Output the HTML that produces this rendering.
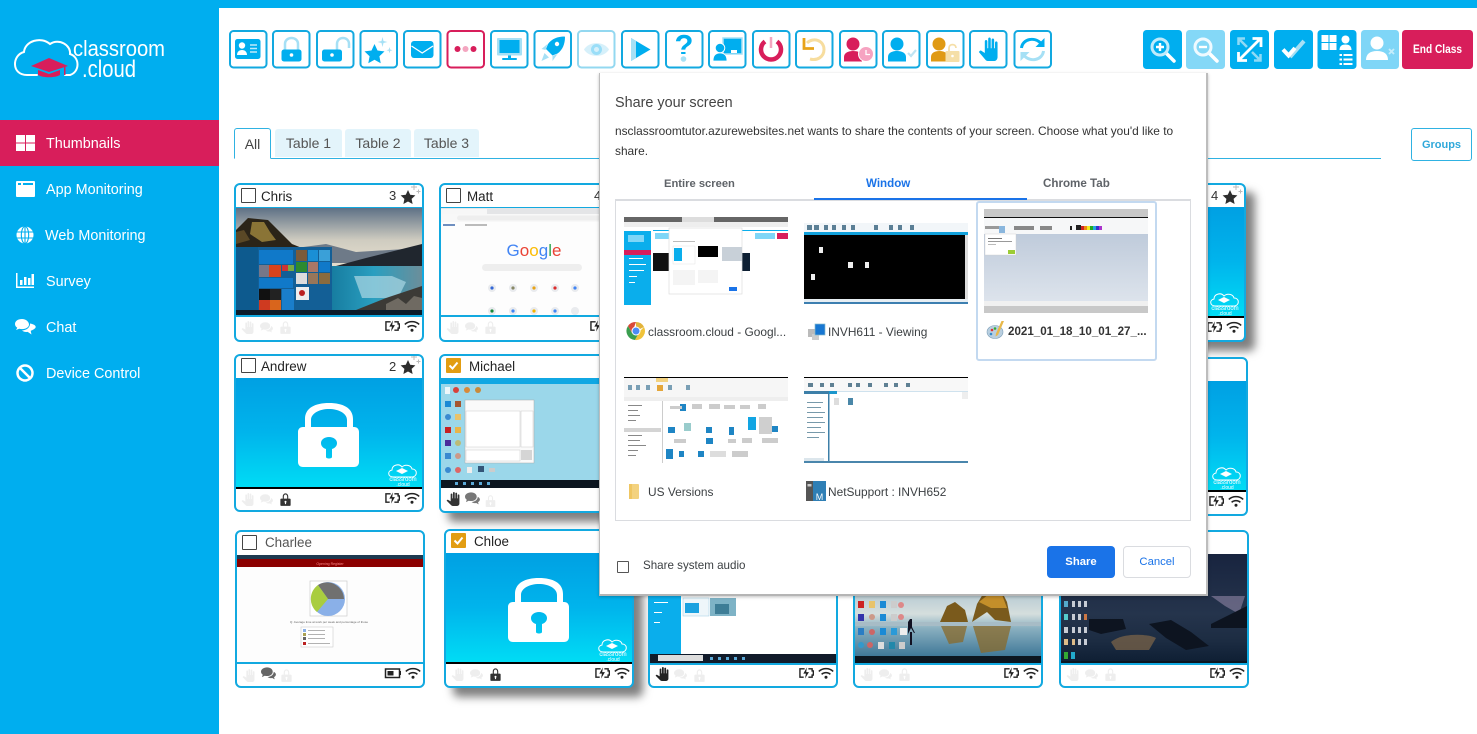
<!DOCTYPE html>
<html lang="en"><head><meta charset="utf-8"><title>classroom.cloud</title>
<style>
html,body{margin:0;padding:0;background:#fff}
body{position:relative;width:1477px;height:734px;overflow:hidden;font-family:"Liberation Sans",sans-serif;color:#222}
.a{position:absolute;white-space:nowrap}
#top{position:absolute;left:0;top:0;width:1477px;height:8px;background:#00aeef}
#side{position:absolute;left:0;top:0;width:219px;height:734px;background:#00aeef}
.nav{position:absolute;left:46px;color:#fff;font-size:14.4px;white-space:nowrap;line-height:18px}
#act{position:absolute;left:0;top:120px;width:219px;height:46px;background:#d81e5b}
.tab{position:absolute;top:129px;height:28px;line-height:29px;background:#e3f4fb;color:#555;font-size:14px;text-align:center;border-radius:3px 3px 0 0}
.card{position:absolute;width:190px;height:159px;box-sizing:border-box;border:2px solid #12a9e0;border-radius:6px;background:#fff;overflow:hidden}
.sh{box-shadow:9px 9px 9px rgba(0,0,0,.5)}
.cb{position:absolute;left:5px;top:3px;width:15px;height:15px;box-sizing:border-box;border:1.5px solid #444;border-radius:1px;background:#fff}
.cb.on{background:#e29d12;border:0}
.nm{position:absolute;left:25px;top:4px;font-size:13.4px;line-height:16px;color:#222;white-space:nowrap}
.num{position:absolute;left:153px;top:3px;font-size:13px;line-height:16px;color:#333}
.st{position:absolute;left:163px;top:-1px;width:22px;height:22px}
.im{position:absolute;left:0;width:186px;display:block}
.ln{position:absolute;left:0;width:186px;background:#12a9e0}
.ft{position:absolute;left:0;width:186px;height:24px}
#dlg{position:absolute;left:599px;top:73px;width:609px;height:523px;background:#fff;box-sizing:border-box;border:1px solid #bdbdbd;border-top:0;border-right:2px solid #bdbdbd;border-bottom:2px solid #b5b5b5;box-shadow:0 1px 3px rgba(0,0,0,.25)}
.d{position:absolute;white-space:nowrap;font-size:11.9px;color:#3c4043;line-height:14px}
.th{position:absolute;display:block}
</style></head>
<body>
<svg width="0" height="0" style="position:absolute">
<defs>
<linearGradient id="lg" x1="0" y1="0" x2="0" y2="1"><stop offset="0" stop-color="#00a0e3"/><stop offset=".5" stop-color="#00b4ec"/><stop offset="1" stop-color="#00dcf5"/></linearGradient>
<symbol id="hand" viewBox="0 0 24 24"><path d="M23 5.500V20c0 2.200-1.800 4-4 4h-7.300c-1.080 0-2.100-.43-2.850-1.190L1 14.830s1.260-1.230 1.300-1.250c.22-.19.49-.29.79-.29.22 0 .42.06.6.16.04.01 4.310 2.460 4.310 2.460V4c0-.83.67-1.500 1.500-1.500S11 3.170 11 4v7h1V1.500c0-.83.67-1.500 1.500-1.500S15 .67 15 1.500V11h1V2.500c0-.83.67-1.500 1.500-1.500s1.500.67 1.500 1.500V11h1V5.500c0-.83.67-1.500 1.500-1.500s1.500.67 1.500 1.500z"/></symbol>
<symbol id="chat" viewBox="0 0 16 13"><path d="M6.500 0C3 0 0 2 0 4.600c0 1.300.7 2.400 1.900 3.200L1 10.400l3-1.500c.8.2 1.600.3 2.500.3 3.500 0 6-2 6-4.600S10 0 6.500 0z"/><path d="M13.600 4.600c0 3-2.900 5.400-6.600 5.600 1 .9 2.200 1.200 3.600 1.200.4 0 .9 0 1.400-.1l2.600 1.400-.7-2.300c1.200-.7 2-1.700 2-2.900 0-1.100-.9-2.100-2.300-2.900z"/></symbol>
<symbol id="lock" viewBox="0 0 12 14"><path fill-rule="evenodd" d="M3 6V3.800C3 1.700 4.300.3 6 .3s3 1.400 3 3.500V6h1.600c.6 0 1 .4 1 1v6c0 .6-.4 1-1 1H1.400c-.6 0-1-.4-1-1V7c0-.6.4-1 1-1zm1.200 0h3.600V3.800C7.800 2.400 7 1.500 6 1.500s-1.800.9-1.800 2.300zM6 8.300a1.200 1.200 0 0 0-.6 2.200V12h1.200v-1.500A1.200 1.200 0 0 0 6 8.300z"/></symbol>
<symbol id="batt" viewBox="0 0 16 12"><path d="M6 1.500H1v9h4M10 10.500h4V8.200h1.300V3.800H14V1.500h-4" fill="none" stroke="#222" stroke-width="1.500"/><path d="M8.400 0 4.600 6.600h2.800L6.400 12l4.200-7H7.700z" fill="#222"/></symbol>
<symbol id="wifi" viewBox="0 0 16 12"><path d="M.8 4.400C4.800.7 11.200.7 15.200 4.400M3.600 7.300c2.500-2.200 6.300-2.200 8.800 0" fill="none" stroke="#222" stroke-width="1.500"/><circle cx="8" cy="10.200" r="1.500" fill="#222"/></symbol>
<symbol id="star" viewBox="0 0 22 22"><path d="M9 6l2.200 4.800 5.200.6-3.800 3.500 1 5.100L9 17.500 4.400 20l1-5.100-3.800-3.500 5.200-.6z" fill="#2e2e2e"/><path d="M15 0v6M12 3h6M19.500 5.500v4M17.500 7.500h4" stroke="#bbb" stroke-width="1"/></symbol>
<symbol id="ft0" viewBox="0 0 186 24"><g fill="#eeeeee"><use href="#hand" x="5" y="4" width="13" height="13"/><use href="#chat" x="24" y="5" width="13" height="11"/><use href="#lock" x="44" y="4" width="11" height="13"/></g><use href="#batt" x="149" y="3" width="15" height="12"/><use href="#wifi" x="168" y="3" width="16" height="12"/></symbol>
<symbol id="ftl" viewBox="0 0 186 24"><g fill="#eeeeee"><use href="#hand" x="5" y="4" width="13" height="13"/><use href="#chat" x="24" y="5" width="13" height="11"/></g><use href="#lock" x="44" y="4" width="11" height="13" fill="#333"/><use href="#batt" x="149" y="3" width="15" height="12"/><use href="#wifi" x="168" y="3" width="16" height="12"/></symbol>
<symbol id="lockscr" viewBox="0 0 186 109" preserveAspectRatio="none"><rect width="186" height="109" fill="url(#lg)"/><path fill="#fff" fill-rule="evenodd" d="M69 49V41C69 30 79 25 93 25S117 30 117 41V49H118C121 49 123 51 123 54V84C123 87 121 89 118 89H67C64 89 62 87 62 84V54C62 51 64 49 67 49zM75 49H111V42C111 35 102 31 93 31S75 35 75 42zM93 59C88.500 59 85 61.500 85 65C85 68 87 70 90 71V79C90 81 96 81 96 79V71C99 70 101 68 101 65C101 61.500 97.500 59 93 59z"/><g fill="none" stroke="#fff" stroke-width="1"><path d="M157 99c-5 0-6-6-1-7 0-5 7-7 10-3 3-3 9-2 10 2 5 0 6 6 1 8z"/></g><path d="M160 93l6-3 6 3-6 3z" fill="#fff"/><text x="167" y="103" font-size="6" fill="#fff" text-anchor="middle" font-family="Liberation Sans">classroom</text><text x="167" y="108" font-size="5" fill="#fff" text-anchor="middle" font-family="Liberation Sans">.cloud</text></symbol>
</defs></svg>

<div id="top"></div>
<div id="side">
  <svg class="a" style="left:0;top:30px" width="219" height="60" viewBox="0 30 219 60">
    <g transform="translate(1 -2)"><path d="M36 77H26C10 77 11 57 23 54 24 43 40 38 49 46 58 40 70 47 69 56 79 59 79 74 69 77H64" fill="none" stroke="#fff" stroke-width="2" stroke-linecap="round"/>
    <path d="M30 68 48 60 67 68 48 74z" fill="#d81e5b"/><path d="M37 72V77C42 80 54 80 59 77V72L48 76z" fill="#d81e5b"/><rect x="63" y="69" width="1.500" height="8" fill="#d81e5b"/></g>
    <text x="73" y="56" font-size="22.500" fill="#fff" textLength="92" lengthAdjust="spacingAndGlyphs">classroom</text>
    <text x="82" y="77" font-size="24" fill="#fff" textLength="54" lengthAdjust="spacingAndGlyphs">.cloud</text>
  </svg>
  <div id="act"></div>
  <svg class="a" style="left:0;top:125px" width="46" height="260" viewBox="0 125 46 260" fill="#fff">
    <rect x="16" y="135" width="9" height="7.500"/><rect x="26" y="135" width="9" height="7.500"/><rect x="16" y="143.500" width="9" height="7.500"/><rect x="26" y="143.500" width="9" height="7.500"/>
    <path fill-rule="evenodd" d="M17 181H34a1 1 0 0 1 1 1V196a1 1 0 0 1-1 1H17a1 1 0 0 1-1-1V182a1 1 0 0 1 1-1zM18 183v2h3v-2zm5 0v2h10v-2z"/>
    <circle cx="25" cy="235" r="8.500" fill="#fff"/>
    <g fill="none" stroke="#00aeef" stroke-width="1.100"><ellipse cx="25" cy="235" rx="3.700" ry="8.500"/><path d="M16.500 232H33.500M16.500 238H33.500M25 226.500V243.500"/></g>
    <path d="M16 273h1.500v13.500H34V288H16z"/><rect x="20" y="280" width="2.500" height="5"/><rect x="24" y="277" width="2.500" height="8"/><rect x="28" y="278" width="2.500" height="7"/><rect x="31.500" y="274" width="2.500" height="11"/>
    <path d="M22 319c-4 0-7 2-7 5 0 1.500.8 2.800 2.300 3.700L16 330l3.200-1.200c.9.200 1.800.3 2.800.3 4 0 7-2 7-4.600S26 319 22 319z"/><path d="M30 323.500c.3 3.500-3 6.700-8 7 1.200 1 2.500 1.500 4.500 1.500l1.200-.1 3.800 2.600-.8-3.600c1.500-.8 5-2 5-4 0-1.500-2-2.800-5.700-3.400z"/>
    <circle cx="25" cy="373" r="7.500" fill="none" stroke="#fff" stroke-width="2.500"/><path d="M19.500 367.500 30.500 378.500" stroke="#fff" stroke-width="2.500"/>
  </svg>
  <div class="nav" style="top:135px">Thumbnails</div>
  <div class="nav" style="top:181px">App Monitoring</div>
  <div class="nav" style="top:227px;left:45px">Web Monitoring</div>
  <div class="nav" style="top:273px">Survey</div>
  <div class="nav" style="top:319px">Chat</div>
  <div class="nav" style="top:365px">Device Control</div>
</div>

<!-- toolbar -->
<svg class="a" style="left:0;top:0" width="1477" height="80" viewBox="0 0 1477 80">
<defs><g id="b"><rect x="1" y="1" width="36.500" height="36.500" rx="3.500" fill="#fff" stroke="#12a9e0" stroke-width="2"/></g>
<g id="bf"><rect width="39" height="39" rx="3.500" fill="#00aeef"/></g></defs>
<g transform="translate(229 30)"><use href="#b"/><rect x="6" y="9" width="25.500" height="20" rx="2.500" fill="#00aeef"/><circle cx="13" cy="15.500" r="3.200" fill="#fff"/><path d="M8 25c0-3 2-5 5-5s5 2 5 5z" fill="#fff"/><path d="M21 15h7M21 18.500h7M21 22h7" stroke="#bfe9fa" stroke-width="1.500"/></g>
<g transform="translate(272 30)"><use href="#b"/><path d="M13 20v-6c0-8 13-8 13 0v6" fill="none" stroke="#a6e0f5" stroke-width="2.500"/><rect x="9.500" y="19.500" width="20" height="12" rx="2.500" fill="#00aeef"/><circle cx="19.500" cy="25" r="1.800" fill="#fff"/></g>
<g transform="translate(316 30)"><use href="#b"/><path d="M21 20v-6c0-8 12-8 12 0v4" fill="none" stroke="#a6e0f5" stroke-width="2.500"/><rect x="6" y="19.500" width="20" height="12" rx="2.500" fill="#00aeef"/><circle cx="16" cy="25" r="1.800" fill="#fff"/></g>
<g transform="translate(359.500 30)"><use href="#b"/><path d="M15 14l3 6.500 7 .9-5.100 4.800 1.300 7L15 29.700l-6.200 3.500 1.300-7L5 21.400l7-.9z" fill="#00aeef"/><path d="M23 7l1 4 4 1-4 1-1 4-1-4-4-1 4-1zM30 17l.7 2.500 2.300.7-2.300.7-.7 2.500-.7-2.500-2.300-.7 2.300-.7z" fill="#a6e0f5"/></g>
<g transform="translate(403 30)"><use href="#b"/><rect x="8" y="11" width="22.500" height="17" rx="3" fill="#00aeef"/><path d="M8.500 16 19.200 23 30 16" fill="none" stroke="#fff" stroke-width="1.300"/></g>
<g transform="translate(446.500 30)"><rect x="1" y="1" width="36.500" height="36.500" rx="3.500" fill="#fff" stroke="#d81e5b" stroke-width="2"/><circle cx="11" cy="19" r="3" fill="#d81e5b"/><circle cx="19" cy="19" r="3" fill="#f4a6c0"/><circle cx="27" cy="19" r="3" fill="#d81e5b"/></g>
<g transform="translate(490 30)"><use href="#b"/><rect x="7" y="8" width="25" height="17.500" rx="1" fill="#a6e0f5"/><rect x="9.500" y="10" width="20" height="13" fill="#00aeef"/><rect x="18" y="25.500" width="3" height="3" fill="#00aeef"/><rect x="12" y="28" width="15" height="2" rx="1" fill="#00aeef"/></g>
<g transform="translate(533.500 30)"><use href="#b"/><path d="M31 6.500C24 6.500 18 9 14.500 14l-2 5 6.500 6.500 5-2C29 20 31.500 14 31.500 7z" fill="#00aeef"/><circle cx="23.500" cy="14" r="2.200" fill="#fff"/><path d="M8 19l6-5-2 6zM19 31l5-7-5 2z" fill="#a6e0f5"/><path d="M11 23l4.500 4.500L8 31z" fill="#a6e0f5"/></g>
<g transform="translate(577 30)" opacity=".45"><use href="#b"/><path d="M7 19.500C12 11 27 11 32 19.500 27 28 12 28 7 19.500z" fill="#a6e0f5"/><circle cx="19.500" cy="19.500" r="5.500" fill="#00aeef" opacity=".8"/><circle cx="19.500" cy="19.500" r="2.500" fill="#a6e0f5"/></g>
<g transform="translate(621 30)"><use href="#b"/><path d="M10 8 29.500 19.500 10 31z" fill="#00aeef"/><path d="M10 8 15 11V28L10 31z" fill="#a6e0f5"/></g>
<g transform="translate(665 30)"><use href="#b"/><text x="19" y="26" font-size="31" font-weight="bold" fill="#00aeef" text-anchor="middle">?</text><rect x="13" y="24" width="12" height="8" fill="#fff"/><circle cx="18.500" cy="29" r="2.800" fill="#a6e0f5"/></g>
<g transform="translate(708 30)"><use href="#b"/><rect x="15" y="8" width="19" height="16" fill="#00aeef" stroke="#a6e0f5" stroke-width="1.500"/><rect x="23" y="20" width="6" height="3" fill="#fff"/><circle cx="12" cy="18" r="4.800" fill="#00aeef" stroke="#fff"/><path d="M5 31c0-6 3-8 7-8s7 2 7 8c0 0-14 0-14 0z" fill="#00aeef" stroke="#fff" stroke-width=".8"/></g>
<g transform="translate(752 30)"><use href="#b"/><path d="M13 11.500A10 10 0 1 0 25 11.500" fill="none" stroke="#d81e5b" stroke-width="4.500"/><path d="M19 7V18" stroke="#f4a6c0" stroke-width="2.500"/></g>
<g transform="translate(795 30)"><use href="#b"/><path d="M12 13C18 7 29 10 29 19.500 29 27 22 31 15 29" fill="none" stroke="#f7dd9e" stroke-width="3"/><path d="M9 8V18.500H19" fill="none" stroke="#e8a317" stroke-width="2.800"/></g>
<g transform="translate(839 30)"><use href="#b"/><circle cx="14" cy="14" r="6.500" fill="#d81e5b"/><path d="M5 31.500V27c0-4 4-6 9-6s8 1.500 9 4V31.500z" fill="#d81e5b"/><circle cx="27" cy="24" r="7.500" fill="#f6a3c1" stroke="#fff" stroke-width="1"/><path d="M27 20V24.500H31" fill="none" stroke="#fff" stroke-width="1.300"/></g>
<g transform="translate(882 30)"><use href="#b"/><circle cx="15" cy="14" r="6.500" fill="#00aeef"/><path d="M6 31.500V27c0-4 4-6 9-6s9 2 9 6v4.500z" fill="#00aeef"/><path d="M26 23l3 3 5-6" fill="none" stroke="#bfe4f3" stroke-width="2.200"/></g>
<g transform="translate(926 30)"><use href="#b"/><circle cx="13" cy="14" r="6.500" fill="#e09a13"/><path d="M5 31.500V27c0-4 3.500-6 8.500-6 3 0 5 .7 6.500 2v8.500z" fill="#e09a13"/><rect x="19.500" y="21" width="14" height="11" rx="1" fill="#f5dfa8"/><path d="M23 21v-3c0-4.500 7-4.500 7 0" fill="none" stroke="#f5dfa8" stroke-width="1.800"/><circle cx="26.500" cy="26" r="1.300" fill="#fff"/></g>
<g transform="translate(969 30)"><use href="#b"/><use href="#hand" width="24" height="24" fill="#00aeef" transform="translate(9 7.500) scale(.85 .98)"/></g>
<g transform="translate(1013.500 30)"><use href="#b"/><path d="M8 18C9 9 21 6 28 14" fill="none" stroke="#00aeef" stroke-width="3"/><path d="M31 8V17H22z" fill="#00aeef"/><path d="M30 21C29 30 17 33 10 25" fill="none" stroke="#a6e0f5" stroke-width="3"/><path d="M7 31V22H16z" fill="#a6e0f5"/></g>

<g transform="translate(1143 30)"><use href="#bf"/><path d="M23 23 31 31" stroke="#fff" stroke-width="3.500" stroke-linecap="round"/><circle cx="17" cy="17" r="8" fill="#00aeef" stroke="#bfeafb" stroke-width="3"/><path d="M13 17h8M17 13v8" stroke="#fff" stroke-width="2.400"/></g>
<g transform="translate(1186 30)" opacity=".48"><use href="#bf"/><path d="M23 23 31 31" stroke="#fff" stroke-width="3.500" stroke-linecap="round"/><circle cx="17" cy="17" r="8" fill="#00aeef" stroke="#dff6ff" stroke-width="3"/><path d="M13 17h8" stroke="#fff" stroke-width="2.400"/></g>
<g transform="translate(1230 30)"><use href="#bf"/><path d="M9 30 30 9M22.500 8.500H31V17M8.500 22V30.500H17" fill="none" stroke="#fff" stroke-width="2.800"/><path d="M9 9 17 17M22 22 30 30M8.500 15V8.500H15M24 30.500H30.500V24" fill="none" stroke="#8fdaf6" stroke-width="2.500"/></g>
<g transform="translate(1274 30)"><use href="#bf"/><path d="M9 19.500 16 27" fill="none" stroke="#fff" stroke-width="4"/><path d="M16 27 30 11" fill="none" stroke="#a6e0f5" stroke-width="4"/><path d="M14.500 25.500 21 18" fill="none" stroke="#fff" stroke-width="4"/></g>
<g transform="translate(1317.500 30)"><use href="#bf"/><g fill="#fff"><rect x="4" y="5" width="7" height="7"/><rect x="12" y="5" width="7" height="7"/><rect x="4" y="13" width="7" height="7"/><rect x="12" y="13" width="7" height="7"/><circle cx="28" cy="9.500" r="4"/><path d="M22 20c0-4 2.500-5.500 6-5.500s6 1.500 6 5.500z"/><rect x="22" y="24" width="2.500" height="2"/><rect x="26" y="24" width="9" height="2"/><rect x="22" y="28.500" width="2.500" height="2"/><rect x="26" y="28.500" width="9" height="2"/><rect x="22" y="33" width="2.500" height="2"/><rect x="26" y="33" width="9" height="2"/></g></g>
<g transform="translate(1361 30)"><rect width="38" height="39" rx="3.500" fill="#7fd6f7"/><circle cx="16" cy="13" r="6.500" fill="#fff"/><path d="M5 30c0-6 4-9 11-9s11 3 11 9z" fill="#fff"/><path d="M28 19l5 5M33 19l-5 5" stroke="#c5edfb" stroke-width="1.800"/></g>
<rect x="1402" y="30" width="71" height="39" rx="3.500" fill="#d81e5b"/>
<text x="1437.500" y="53" font-size="11.500" font-weight="bold" fill="#fff" text-anchor="middle" textLength="49" lengthAdjust="spacingAndGlyphs">End Class</text>
</svg>

<!-- tabs -->
<div class="a" style="left:234px;top:158px;width:1147px;height:1px;background:#2fb2e2"></div>
<div class="a" style="left:234px;top:128px;width:37px;height:31px;box-sizing:border-box;border:1px solid #2fb2e2;border-bottom:1px solid #fff;border-radius:3px 3px 0 0;background:#fff;text-align:center;font-size:14px;line-height:30px;color:#444">All</div>
<div class="tab" style="left:275px;width:67px">Table 1</div>
<div class="tab" style="left:345px;width:66px">Table 2</div>
<div class="tab" style="left:414px;width:65px">Table 3</div>
<div class="a" style="left:1411px;top:128px;width:61px;height:33px;box-sizing:border-box;border:1px solid #2fb2e2;border-radius:3px;text-align:center;color:#2fa8da;font-size:11px;font-weight:bold;line-height:33px">Groups</div>

<!-- cards -->
<div class="card" style="left:234px;top:183px">
  <div class="cb"></div><div class="nm">Chris</div><div class="num">3</div><svg class="st"><use href="#star" width="22" height="22"/></svg>
  <div class="ln" style="top:22px;height:1px"></div>
  <svg class="im" style="top:23px" height="107" viewBox="0 0 186 107">
    <defs><linearGradient id="sk" x1="0" y1="0" x2="0" y2="1"><stop offset="0" stop-color="#5e7186"/><stop offset=".3" stop-color="#cfccc0"/><stop offset=".5" stop-color="#e2dccd"/></linearGradient><linearGradient id="lk" x1="0" y1="0" x2="1" y2="0"><stop offset="0" stop-color="#14789c"/><stop offset=".5" stop-color="#2a9fc0"/><stop offset="1" stop-color="#6c8e9a"/></linearGradient></defs>
    <rect width="186" height="107" fill="url(#sk)"/>
    <path d="M0 22 12 10 32 12 42 22 56 36 66 40H0z" fill="#2b2418"/><path d="M16 14 28 14 34 24 40 32 26 34 14 26z" fill="#8a7436"/><path d="M0 24 8 22 14 32 0 36z" fill="#5a4826"/>
    <path d="M60 40 90 36 120 44 186 40V55H60z" fill="#6e7a88"/><path d="M100 58 130 50 186 36V62H100z" fill="#20262e"/>
    <rect x="90" y="58" width="96" height="44" fill="url(#lk)"/><path d="M118 68h38l14 6-8 16h-36z" fill="#a5d3e0" opacity=".75"/>
    <path d="M120 102 150 90 186 78V105H120z" fill="#3c3a36"/><path d="M150 96l12-6 8 6 8-8 8 2v14h-36z" fill="#6f6a62"/>
    <rect x="0" y="39" width="96" height="65" fill="#135f96"/><rect x="0" y="39" width="22" height="65" fill="#0d5a8e"/>
    <rect x="23" y="42" width="34" height="14" fill="#1079c9"/><rect x="23" y="57" width="10" height="12" fill="#778"/><rect x="33" y="57" width="12" height="12" fill="#d8431b"/><rect x="46" y="57" width="6" height="6" fill="#c33"/><rect x="52" y="57" width="6" height="6" fill="#7a4"/>
    <rect x="23" y="70" width="34" height="10" fill="#1079c9"/><rect x="23" y="81" width="11" height="11" fill="#111"/><rect x="34" y="81" width="11" height="11" fill="#222"/><rect x="23" y="92" width="11" height="11" fill="#cf3a20"/><rect x="34" y="92" width="11" height="11" fill="#d9651c"/><rect x="46" y="81" width="12" height="11" fill="#1a7ecb"/><rect x="46" y="92" width="12" height="11" fill="#1a7ecb"/>
    <rect x="60" y="42" width="11" height="11" fill="#7b5b3a"/><rect x="72" y="42" width="10" height="11" fill="#1a8fd5"/><rect x="83" y="42" width="11" height="11" fill="#3aa0d8"/><rect x="60" y="54" width="11" height="10" fill="#2d8a2f"/><rect x="72" y="54" width="10" height="10" fill="#a76"/><rect x="83" y="54" width="11" height="10" fill="#1079c9"/><rect x="60" y="65" width="11" height="11" fill="#ddd"/><rect x="72" y="65" width="10" height="11" fill="#97765a"/><rect x="83" y="65" width="11" height="11" fill="#8a6b3e"/><rect x="60" y="79" width="13" height="13" fill="#eee"/><circle cx="66" cy="85" r="3" fill="#b22"/>
    <rect x="0" y="102" width="186" height="5" fill="#0d1c2a"/>
  </svg>
  <div class="ln" style="top:130px;height:2px"></div>
  <svg class="ft" style="top:132px" viewBox="0 0 186 24"><use href="#ft0" width="186" height="24"/></svg>
</div>

<div class="card" style="left:439px;top:183px">
  <div class="cb"></div><div class="nm" style="left:26px">Matt</div><div class="num">4</div>
  <div class="ln" style="top:22px;height:1px"></div>
  <svg class="im" style="top:23px" height="107" viewBox="0 0 186 107">
    <rect width="186" height="107" fill="#fdfdfd"/><rect width="186" height="6" fill="#e4e5e7"/><rect x="0" y="1" width="46" height="5" fill="#f7f7f7"/><rect y="6" width="186" height="8" fill="#f8f8f8"/><rect x="16" y="7.500" width="164" height="5" rx="2.500" fill="#eeeeee"/><rect x="2" y="16" width="12" height="2" fill="#6f8fc0"/><rect x="24" y="16" width="22" height="2" fill="#bbb"/>
    <text x="93" y="48" font-size="17" text-anchor="middle" font-family="Liberation Sans"><tspan fill="#4285f4">G</tspan><tspan fill="#ea4335">o</tspan><tspan fill="#fbbc05">o</tspan><tspan fill="#4285f4">g</tspan><tspan fill="#34a853">l</tspan><tspan fill="#ea4335">e</tspan></text>
    <rect x="41" y="56" width="100" height="7" rx="3.500" fill="#eeeeee"/>
    <g fill="#e9ebee"><circle cx="51" cy="80" r="4"/><circle cx="72" cy="80" r="4"/><circle cx="93" cy="80" r="4"/><circle cx="114" cy="80" r="4"/><circle cx="134" cy="80" r="4"/><circle cx="51" cy="103" r="4"/><circle cx="72" cy="103" r="4"/><circle cx="93" cy="103" r="4"/><circle cx="114" cy="103" r="4"/><circle cx="134" cy="103" r="4"/></g>
    <g><circle cx="51" cy="80" r="1.600" fill="#3367d6"/><circle cx="72" cy="80" r="1.600" fill="#886"/><circle cx="93" cy="80" r="1.600" fill="#e8a317"/><circle cx="114" cy="80" r="1.600" fill="#db2d2d"/><circle cx="134" cy="80" r="1.600" fill="#4285f4"/><circle cx="51" cy="103" r="1.600" fill="#1a8a3a"/><circle cx="72" cy="103" r="1.600" fill="#4285f4"/><circle cx="93" cy="103" r="1.600" fill="#f4b400"/><circle cx="114" cy="103" r="1.600" fill="#4285f4"/></g>
  </svg>
  <div class="ln" style="top:130px;height:2px"></div>
  <svg class="ft" style="top:132px" viewBox="0 0 186 24"><use href="#ft0" width="186" height="24"/></svg>
</div>

<div class="card sh" style="left:1056px;top:183px">
  <div class="num">4</div><svg class="st"><use href="#star" width="22" height="22"/></svg>
  <svg class="im" style="top:22px" height="109" viewBox="0 0 186 109"><use href="#lockscr" width="186" height="109"/></svg>
  <div class="ln" style="top:131px;height:2px;background:#000"></div>
  <svg class="ft" style="top:133px" viewBox="0 0 186 24"><use href="#ft0" width="186" height="24"/></svg>
</div>

<div class="card" style="left:234px;top:354px;height:158px">
  <div class="cb" style="top:2px"></div><div class="nm" style="top:3px">Andrew</div><div class="num" style="top:3px">2</div><svg class="st" style="top:-2px"><use href="#star" width="22" height="22"/></svg>
  <svg class="im" style="top:22px" height="109" viewBox="0 0 186 109"><use href="#lockscr" width="186" height="109"/></svg>
  <div class="ln" style="top:131px;height:2px;background:#000"></div>
  <svg class="ft" style="top:133px" viewBox="0 0 186 24"><use href="#ftl" width="186" height="24"/></svg>
</div>

<div class="card sh" style="left:439px;top:354px;height:159px">
  <div class="cb on" style="top:2px"><svg width="15" height="15"><path d="M3.500 7.500 6.500 10.500 11.500 4.500" fill="none" stroke="#fff" stroke-width="2"/></svg></div><div class="nm" style="top:3px;left:28px">Michael</div>
  <svg class="im" style="top:22px" height="110" viewBox="0 0 186 110">
    <rect width="186" height="110" fill="#9bd7ea"/><rect width="186" height="6" fill="#10a7e3"/>
    <g fill="#eef7fa"><rect x="4" y="9" width="5" height="7"/></g>
    <circle cx="15" cy="12" r="3" fill="#d8413a"/><circle cx="26" cy="12" r="3" fill="#d88a3a"/><circle cx="37" cy="12" r="3" fill="#c98a3a"/>
    <rect x="4" y="23" width="6" height="6" fill="#1a8ad5"/><rect x="14" y="23" width="6" height="6" fill="#a5562f"/><circle cx="7" cy="39" r="3" fill="#3a8ad0"/><rect x="14" y="36" width="6" height="6" fill="#e8c36a"/>
    <rect x="4" y="49" width="6" height="6" fill="#c62222"/><rect x="14" y="49" width="6" height="6" fill="#e8b44a"/><rect x="4" y="62" width="6" height="6" fill="#4a2c9a"/><circle cx="17" cy="65" r="3" fill="#bb7"/><rect x="4" y="75" width="6" height="6" fill="#3a8ad0"/><circle cx="17" cy="78" r="3" fill="#c98"/>
    <circle cx="7" cy="92" r="3" fill="#3a8ad0"/><circle cx="17" cy="92" r="3" fill="#d66"/><rect x="26" y="89" width="5" height="6" fill="#eee"/><rect x="37" y="88" width="6" height="6" fill="#357"/><rect x="48" y="90" width="6" height="4" fill="#ccc"/>
    <rect x="24" y="22" width="69" height="63" fill="#fafafa" stroke="#aaa" stroke-width=".5"/><rect x="25" y="33" width="54" height="36" fill="#fff" stroke="#ccc" stroke-width=".5"/><rect x="80" y="33" width="12" height="36" fill="#fff" stroke="#ccc" stroke-width=".5"/><rect x="25" y="72" width="54" height="11" fill="#fff" stroke="#ccc" stroke-width=".5"/><rect x="80" y="72" width="11" height="10" fill="#d5d5d5"/>
    <rect y="102" width="186" height="8" fill="#0c1620"/><g fill="#5ba9d8"><rect x="14" y="104" width="3" height="3"/><rect x="22" y="104" width="3" height="3"/><rect x="30" y="104" width="3" height="3"/><rect x="38" y="104" width="3" height="3"/><rect x="46" y="104" width="3" height="3"/></g>
  </svg>
  <svg class="ft" style="top:134px" viewBox="0 0 186 24"><use href="#hand" x="5" y="2" width="14" height="14" fill="#333"/><use href="#chat" x="24" y="2" width="15" height="13" fill="#777"/><use href="#lock" x="44" y="5" width="11" height="12" fill="#eeeeee"/></svg>
</div>

<div class="card" style="left:1058px;top:357px;height:159px">
  <svg class="im" style="top:22px" height="109" viewBox="0 0 186 109"><use href="#lockscr" width="186" height="109"/></svg>
  <div class="ln" style="top:131px;height:2px;background:#000"></div>
  <svg class="ft" style="top:133px" viewBox="0 0 186 24"><use href="#ft0" width="186" height="24"/></svg>
</div>

<div class="card" style="left:235px;top:530px;height:158px">
  <div class="cb"></div><div class="nm" style="left:28px;top:3px;color:#555">Charlee</div>
  <svg class="im" style="top:23px" height="107" viewBox="0 0 186 107">
    <rect width="186" height="107" fill="#fdfdfd"/><rect width="186" height="4" fill="#1e3a50"/><rect y="4" width="186" height="8" fill="#8b0000"/><text x="93" y="10" font-size="3.500" fill="#f88" text-anchor="middle">Opening Register</text>
    <rect x="73" y="26" width="37" height="35" fill="#fff" stroke="#ccc" stroke-width=".7"/>
    <circle cx="91" cy="44" r="17" fill="#8ab0e8"/><path d="M91 44 107 44A17 17 0 0 0 81 30z" fill="#707070"/><path d="M91 44 81 30A17 17 0 0 0 80 57z" fill="#a9cd3f"/>
    <text x="92" y="68" font-size="3" fill="#666" text-anchor="middle">Q: Average time at work per week and percentage of those</text>
    <rect x="64" y="72" width="32" height="20" fill="#fff" stroke="#ccc" stroke-width=".6"/><g><rect x="66" y="74" width="3" height="3" fill="#8ab0e8"/><rect x="66" y="78" width="3" height="3" fill="#a9a050"/><rect x="66" y="82" width="3" height="3" fill="#666"/><rect x="66" y="87" width="3" height="3" fill="#b22"/></g><path d="M71 75.500H88M71 79.500H88M71 83.500H88M71 88.500H93" stroke="#999" stroke-width=".8"/>
  </svg>
  <div class="ln" style="top:130px;height:2px"></div>
  <svg class="ft" style="top:132px" viewBox="0 0 186 24"><use href="#hand" x="5" y="5" width="13" height="13" fill="#eeeeee"/><use href="#chat" x="24" y="3" width="15" height="13" fill="#666"/><use href="#lock" x="44" y="5" width="11" height="13" fill="#eeeeee"/><rect x="148.500" y="5" width="14" height="8.500" fill="none" stroke="#222" stroke-width="1.500"/><rect x="150.500" y="7" width="6" height="4.500" fill="#222"/><rect x="162.500" y="7" width="1.500" height="4" fill="#222"/><use href="#wifi" x="168" y="3" width="16" height="12"/></svg>
</div>

<div class="card sh" style="left:444px;top:529px;height:159px">
  <div class="cb on" style="top:2px"><svg width="15" height="15"><path d="M3.500 7.500 6.500 10.500 11.500 4.500" fill="none" stroke="#fff" stroke-width="2"/></svg></div><div class="nm" style="top:3px;left:28px">Chloe</div>
  <svg class="im" style="top:22px" height="109" viewBox="0 0 186 109"><use href="#lockscr" width="186" height="109"/></svg>
  <div class="ln" style="top:131px;height:2px;background:#000"></div>
  <svg class="ft" style="top:133px" viewBox="0 0 186 24"><use href="#ftl" width="186" height="24"/></svg>
</div>

<div class="card" style="left:648px;top:530px;height:158px">
  <svg class="im" style="top:22px" height="109" viewBox="0 0 186 109">
    <rect width="186" height="109" fill="#fff"/><rect width="31" height="100" fill="#0aaeec"/><rect x="33" y="44" width="26" height="18" fill="#eef6fa" stroke="#9ccde6" stroke-width=".5"/><rect x="35" y="49" width="14" height="10" fill="#1ba2e0"/><rect x="60" y="44" width="26" height="18" fill="#7eb3c6"/><rect x="65" y="50" width="14" height="10" fill="#3e7d96"/>
    <rect x="4" y="48" width="14" height="1" fill="#fff"/><rect x="4" y="58" width="8" height="1" fill="#fff"/><rect x="4" y="68" width="6" height="1" fill="#fff"/>
    <rect y="100" width="186" height="9" fill="#111b2a"/><rect x="8" y="101" width="45" height="6" fill="#ddd"/><g fill="#5ba9d8"><rect x="60" y="103" width="3" height="3"/><rect x="68" y="103" width="3" height="3"/><rect x="76" y="103" width="3" height="3"/><rect x="84" y="103" width="3" height="3"/><rect x="92" y="103" width="3" height="3"/></g>
  </svg>
  <div class="ln" style="top:131px;height:2px"></div>
  <svg class="ft" style="top:133px" viewBox="0 0 186 24"><use href="#hand" x="5" y="2" width="14" height="14" fill="#222"/><use href="#chat" x="24" y="4" width="13" height="11" fill="#eeeeee"/><use href="#lock" x="44" y="4" width="11" height="13" fill="#eeeeee"/><use href="#batt" x="149" y="2" width="15" height="12"/><use href="#wifi" x="168" y="2" width="16" height="12"/></svg>
</div>

<div class="card" style="left:853px;top:530px;height:158px">
  <svg class="im" style="top:22px" height="109" viewBox="0 0 186 109">
    <defs><linearGradient id="bh" x1="0" y1="0" x2="0" y2="1"><stop offset="0" stop-color="#7ea6c0"/><stop offset=".55" stop-color="#d5dedd"/><stop offset=".68" stop-color="#8ab0c0"/><stop offset="1" stop-color="#2d6a8e"/></linearGradient></defs>
    <rect width="186" height="109" fill="url(#bh)"/>
    <path d="M85 68 92 52 100 48 110 56 113 68zM117 68 122 50 128 40 146 36 152 48 156 68 140 66 132 58z" fill="#7a5a1c"/><path d="M124 48 134 40 146 38 152 54 136 54z" fill="#c48f2a"/>
    <path d="M86 72 112 72 108 88 94 90zM118 72 156 72 150 96 126 99z" fill="#8a6a2a" opacity=".75"/>
    <path d="M0 68H186V72H0z" fill="#a7bcc6"/>
    <g><rect x="3" y="47" width="6" height="7" fill="#c22"/><rect x="14" y="47" width="6" height="7" fill="#e8c36a"/><rect x="25" y="47" width="6" height="7" fill="#1a8ad5"/><rect x="36" y="47" width="6" height="7" fill="#ccc"/><circle cx="46" cy="51" r="3" fill="#d88"/><rect x="3" y="60" width="6" height="7" fill="#33a"/><circle cx="17" cy="63" r="3" fill="#c98"/><rect x="25" y="60" width="6" height="7" fill="#1a8ad5"/><rect x="36" y="60" width="6" height="7" fill="#ccc"/><circle cx="46" cy="63" r="3" fill="#d88"/><rect x="3" y="74" width="6" height="7" fill="#2a7dc4"/><circle cx="17" cy="78" r="3" fill="#c66"/><rect x="25" y="74" width="6" height="7" fill="#1a8ad5"/><rect x="36" y="74" width="6" height="7" fill="#2a9ad8"/><rect x="45" y="74" width="7" height="7" fill="#eee"/><circle cx="6" cy="91" r="3" fill="#39c"/><circle cx="15" cy="91" r="3" fill="#c66"/><rect x="23" y="88" width="6" height="7" fill="#ddd"/><rect x="34" y="88" width="6" height="7" fill="#28a"/><rect x="44" y="88" width="6" height="7" fill="#ccc"/></g>
    <path d="M53 68l2-3 2 0 0 8 3 6-1 0-3-5-3 6zM55 78h2v13h-2z" fill="#112"/>
    <rect y="102" width="186" height="7" fill="#0c1620"/>
  </svg>
  <div class="ln" style="top:131px;height:2px"></div>
  <svg class="ft" style="top:133px" viewBox="0 0 186 24"><use href="#ft0" y="-1" width="186" height="24"/></svg>
</div>

<div class="card" style="left:1059px;top:530px;height:158px">
  <svg class="im" style="top:22px" height="109" viewBox="0 0 186 109">
    <defs><linearGradient id="nt" x1="0" y1="0" x2="0" y2="1"><stop offset="0" stop-color="#18243f"/><stop offset=".55" stop-color="#25344c"/><stop offset=".8" stop-color="#1c2c42"/><stop offset="1" stop-color="#0e1e33"/></linearGradient></defs>
    <rect width="186" height="109" fill="url(#nt)"/><path d="M150 42 184 42 178 60 164 52z" fill="#8f86a5" opacity=".6"/>
    <path d="M150 70 186 52V74H150zM88 70 110 66 130 78 148 92 125 96 105 84zM28 65H62L65 75 40 80 28 76z" fill="#0d1420"/><path d="M50 88C62 78 88 80 95 84L88 96H55z" fill="#7a6348" opacity=".75"/>
    <g fill="#c7ccd4"><rect x="3" y="47" width="4" height="6" fill="#5ac"/><rect x="11" y="47" width="3" height="6"/><rect x="17" y="47" width="3" height="6"/><rect x="23" y="47" width="3" height="6"/><rect x="3" y="60" width="4" height="6" fill="#5cc"/><rect x="11" y="60" width="3" height="6"/><rect x="17" y="60" width="3" height="6"/><rect x="23" y="60" width="3" height="6" fill="#c74"/><rect x="3" y="73" width="4" height="6"/><rect x="11" y="73" width="3" height="6"/><rect x="17" y="73" width="3" height="6"/><rect x="23" y="73" width="3" height="6"/><rect x="3" y="85" width="4" height="6" fill="#db8"/><rect x="11" y="85" width="3" height="6" fill="#db8"/><rect x="17" y="85" width="3" height="6"/><rect x="23" y="85" width="3" height="6"/><rect x="3" y="98" width="4" height="7" fill="#3a3"/><rect x="10" y="98" width="4" height="7" fill="#2ac"/></g>
    <rect x="0" y="107" width="186" height="2" fill="#0c1620"/>
  </svg>
  <div class="ln" style="top:131px;height:2px"></div>
  <svg class="ft" style="top:133px" viewBox="0 0 186 24"><use href="#ft0" y="-1" width="186" height="24"/></svg>
</div>

<!-- dialog -->
<div id="dlg">
  <div class="d" style="left:15px;top:21px;font-size:14.400px;line-height:18px;color:#444">Share your screen</div>
  <div class="d" style="left:15px;top:51px;color:#333">nsclassroomtutor.azurewebsites.net wants to share the contents of your screen. Choose what you'd like to</div>
  <div class="d" style="left:15px;top:71px;color:#333">share.</div>
  <div class="d" style="left:64px;top:104px;font-weight:bold;font-size:11.200px;color:#5f6368">Entire screen</div>
  <div class="d" style="left:266px;top:104px;font-weight:bold;font-size:11.600px;color:#1a73e8">Window</div>
  <div class="d" style="left:443px;top:104px;font-weight:bold;font-size:11.600px;color:#5f6368">Chrome Tab</div>
  <div class="a" style="left:15px;top:126px;width:576px;height:322px;box-sizing:border-box;border:1px solid #dadce0;border-top:2px solid #dadce0"></div>
  <div class="a" style="left:214px;top:125px;width:213px;height:2px;background:#1a73e8"></div>
  <div class="a" style="left:376px;top:128px;width:181px;height:160px;box-sizing:border-box;border:2px solid #c3d9f0;border-radius:3px"></div>

  <!-- thumb 1 -->
  <svg class="th" style="left:24px;top:144px" width="164" height="88" viewBox="0 0 164 88">
    <rect width="164" height="88" fill="#fff"/><rect width="164" height="5" fill="#666"/><rect x="58" y="0" width="32" height="5" fill="#ddd"/><rect y="5" width="164" height="5" fill="#eee"/>
    <rect y="14" width="27" height="74" fill="#0aaeec"/><rect y="33" width="27" height="5" fill="#d81e5b"/><rect x="4" y="18" width="16" height="7" fill="#7fd6f7"/><rect x="5" y="41" width="14" height="1" fill="#fff"/><rect x="5" y="47" width="17" height="1" fill="#fff"/><rect x="5" y="53" width="15" height="1" fill="#fff"/><rect x="5" y="59" width="8" height="1" fill="#fff"/><rect x="5" y="65" width="6" height="1" fill="#fff"/>
    <rect x="31" y="16" width="16" height="6" fill="#7fd6f7"/><rect x="131" y="16" width="20" height="6" fill="#7fd6f7"/><rect x="153" y="16" width="11" height="6" fill="#d81e5b"/><rect x="29" y="13" width="135" height="1" fill="#0aaeec"/>
    <rect x="29" y="36" width="18" height="18" fill="#111"/><rect x="117" y="36" width="9" height="18" fill="#0e2034"/><rect x="112" y="36" width="2" height="18" fill="#ccc"/>
    <rect x="45" y="11" width="73" height="66" fill="#fff" stroke="#ddd" stroke-width=".7"/>
    <rect x="49" y="24" width="22" height="1" fill="#bbb"/><rect x="49" y="29" width="22" height="18" fill="#fff" stroke="#ddd" stroke-width=".4"/><rect x="50" y="31" width="8" height="13" fill="#0aaeec"/><rect x="74" y="29" width="20" height="11" fill="#000"/><rect x="98" y="30" width="20" height="14" fill="#c8d0d8"/><rect x="49" y="53" width="22" height="15" fill="#f4f4f4"/><rect x="74" y="53" width="20" height="13" fill="#f4f4f4"/><rect x="105" y="70" width="8" height="4" fill="#1a73e8"/>
  </svg>
  <!-- thumb 2 -->
  <svg class="th" style="left:204px;top:144px" width="164" height="87" viewBox="0 0 164 87">
    <rect width="164" height="87" fill="#fff"/><rect y="6" width="164" height="9" fill="#f2f6f9"/><g fill="#5b7f95"><rect x="3" y="8" width="5" height="5"/><rect x="10" y="8" width="5" height="5"/><rect x="20" y="8" width="4" height="5"/><rect x="28" y="8" width="4" height="5"/><rect x="38" y="8" width="4" height="5"/><rect x="47" y="8" width="4" height="5"/><rect x="70" y="8" width="4" height="5"/><rect x="85" y="8" width="4" height="5"/><rect x="94" y="8" width="4" height="5"/><rect x="106" y="8" width="4" height="5"/></g>
    <rect y="15" width="164" height="3" fill="#11a1dc"/><rect y="18" width="161" height="65" fill="#000"/><rect x="161" y="18" width="3" height="65" fill="#ddd"/>
    <g fill="#eee"><rect x="15" y="30" width="4" height="6"/><rect x="44" y="45" width="5" height="6"/><rect x="61" y="45" width="4" height="6"/><rect x="7" y="57" width="4" height="6"/></g>
    <rect y="82" width="164" height="3" fill="#e7eef3"/><rect y="85" width="164" height="2" fill="#3d7fb0"/>
  </svg>
  <!-- thumb 3 -->
  <svg class="th" style="left:384px;top:136px" width="164" height="104" viewBox="0 0 164 104">
    <defs><linearGradient id="cv" x1="0" y1="0" x2="0" y2="1"><stop offset="0" stop-color="#bfcbdb"/><stop offset="1" stop-color="#dfe5ed"/></linearGradient></defs>
    <rect width="164" height="104" fill="#c8c8c8"/><rect y="8" width="164" height="1" fill="#111"/><rect y="9" width="164" height="16" fill="#f6f7f8"/><rect y="25" width="164" height="72" fill="url(#cv)"/><rect y="92" width="164" height="5" fill="#f0f0f0"/>
    <rect x="1" y="17" width="14" height="3" fill="#999"/><rect x="15" y="17" width="6" height="7" fill="#8ab6dd"/><g fill="#888"><rect x="30" y="17" width="20" height="4"/><rect x="56" y="17" width="12" height="4"/></g>
    <g><rect x="86" y="17" width="2" height="4" fill="#222"/><rect x="92" y="16" width="5" height="5" fill="#222"/><rect x="97" y="17" width="3" height="4" fill="#c22"/><rect x="100" y="17" width="3" height="4" fill="#e81"/><rect x="103" y="17" width="3" height="4" fill="#ee2"/><rect x="106" y="17" width="3" height="4" fill="#2a2"/><rect x="109" y="17" width="3" height="4" fill="#2ad"/><rect x="112" y="17" width="3" height="4" fill="#33c"/><rect x="115" y="17" width="3" height="4" fill="#a3c"/></g>
    <rect x="1" y="25" width="31" height="21" fill="#fff" stroke="#ccc" stroke-width=".4"/><rect x="4" y="29" width="14" height="1" fill="#777"/><rect x="4" y="32" width="24" height="1" fill="#999"/><rect x="4" y="35" width="8" height="1" fill="#bbb"/><rect x="24" y="41" width="7" height="4" fill="#9ccc35"/>
  </svg>
  <!-- thumb 4 -->
  <svg class="th" style="left:24px;top:304px" width="164" height="88" viewBox="0 0 164 88">
    <rect width="164" height="88" fill="#fff"/><rect width="164" height="1" fill="#000"/><rect y="1" width="164" height="19" fill="#f6f6f6"/><rect x="32" y="1" width="12" height="4" fill="#f3d27f"/><g fill="#7a9fb5"><rect x="4" y="8" width="4" height="5"/><rect x="12" y="8" width="4" height="5"/><rect x="22" y="8" width="4" height="5"/><rect x="34" y="8" width="4" height="5"/><rect x="44" y="8" width="4" height="5"/><rect x="62" y="8" width="4" height="5"/></g><rect x="33" y="8" width="6" height="6" fill="#e4a63a"/>
    <rect x="0" y="20" width="164" height="4" fill="#eee"/><rect x="38" y="24" width="1" height="62" fill="#ccc"/><rect x="0" y="51" width="37" height="4" fill="#d4d4d4"/>
    <g fill="#888"><rect x="4" y="28" width="14" height="1"/><rect x="4" y="33" width="10" height="1"/><rect x="4" y="38" width="12" height="1"/><rect x="4" y="43" width="8" height="1"/><rect x="4" y="58" width="14" height="1"/><rect x="4" y="63" width="12" height="1"/><rect x="4" y="68" width="18" height="1"/><rect x="4" y="73" width="10" height="1"/><rect x="4" y="78" width="8" height="1"/></g>
    <rect x="124" y="40" width="8" height="13" fill="#12a5e3"/><rect x="135" y="40" width="13" height="17" fill="#cfcfcf"/><rect x="44" y="50" width="7" height="6" fill="#1e85c4"/><rect x="60" y="46" width="7" height="8" fill="#9cc"/><rect x="82" y="50" width="6" height="6" fill="#1e85c4"/><rect x="105" y="50" width="5" height="8" fill="#1e85c4"/><rect x="148" y="49" width="6" height="6" fill="#1e85c4"/>
    <rect x="56" y="27" width="6" height="7" fill="#1e85c4"/><rect x="46" y="29" width="12" height="3" fill="#ccc"/><rect x="68" y="27" width="10" height="5" fill="#ccc"/><rect x="85" y="27" width="11" height="5" fill="#ccc"/><rect x="100" y="28" width="11" height="4" fill="#ccc"/><rect x="116" y="28" width="10" height="4" fill="#ccc"/><rect x="134" y="27" width="8" height="5" fill="#ccc"/>
    <rect x="42" y="72" width="7" height="10" fill="#1e85c4"/><rect x="55" y="74" width="5" height="6" fill="#1e85c4"/><rect x="74" y="74" width="6" height="6" fill="#1e85c4"/><rect x="86" y="74" width="16" height="6" fill="#ddd"/><rect x="108" y="74" width="16" height="6" fill="#ccc"/>
    <rect x="82" y="61" width="7" height="6" fill="#1e85c4"/><rect x="50" y="62" width="12" height="4" fill="#ccc"/><rect x="104" y="62" width="8" height="4" fill="#ccc"/><rect x="118" y="61" width="10" height="5" fill="#ccc"/><rect x="138" y="61" width="16" height="5" fill="#ccc"/>
  </svg>
  <!-- thumb 5 -->
  <svg class="th" style="left:204px;top:304px" width="164" height="88" viewBox="0 0 164 88">
    <rect width="164" height="88" fill="#fff"/><rect width="164" height="1" fill="#000"/><rect y="1" width="164" height="13" fill="#f8f8f8"/><g fill="#5f8093"><rect x="4" y="6" width="5" height="4"/><rect x="16" y="6" width="4" height="4"/><rect x="26" y="6" width="4" height="4"/><rect x="44" y="6" width="4" height="4"/><rect x="52" y="6" width="4" height="4"/><rect x="64" y="6" width="4" height="4"/><rect x="80" y="6" width="4" height="4"/><rect x="90" y="6" width="4" height="4"/><rect x="102" y="6" width="4" height="4"/></g>
    <rect y="14" width="25" height="3" fill="#3d7fa8"/><rect x="25" y="14" width="8" height="3" fill="#1b96cc"/><rect x="33" y="14" width="131" height="1" fill="#cfe2ee"/>
    <rect x="24" y="17" width="1.500" height="67" fill="#3d7fa8"/><rect x="158" y="15" width="6" height="7" fill="#eee"/>
    <g fill="#79a"><rect x="3" y="25" width="16" height="1"/><rect x="3" y="30" width="14" height="1"/><rect x="3" y="35" width="18" height="1"/><rect x="3" y="40" width="16" height="1"/><rect x="3" y="45" width="18" height="1"/><rect x="3" y="50" width="14" height="1"/><rect x="3" y="55" width="18" height="1"/><rect x="3" y="60" width="12" height="1"/></g>
    <rect x="30" y="21" width="5" height="7" fill="#ddd"/><rect x="44" y="21" width="5" height="7" fill="#4a87a8"/><rect y="84" width="164" height="2" fill="#4a86ac"/><rect y="81" width="20" height="3" fill="#dce6ec"/>
  </svg>

  <!-- labels/icons -->
  <svg class="a" style="left:26px;top:248px" width="20" height="20" viewBox="0 0 20 20"><path d="M10 10 10 1A9 9 0 0 1 18 6z" fill="#e2b33b"/><path d="M10 1A9 9 0 0 0 2 5L6 12z" fill="#d94a38"/><path d="M2 5A9 9 0 0 0 9 19L13 12 6 12z" fill="#3a9e4f"/><path d="M18 6A9 9 0 0 1 9 19L14 10z" fill="#f0c33a"/><circle cx="10" cy="10" r="4.500" fill="#fff"/><circle cx="10" cy="10" r="3.500" fill="#4c8bf5"/></svg>
  <div class="d" style="left:48px;top:252px">classroom.cloud - Googl...</div>
  <svg class="a" style="left:207px;top:248px" width="20" height="20" viewBox="0 0 20 20"><rect x="1" y="8" width="8" height="8" fill="#bbb"/><rect x="5" y="13" width="7" height="6" fill="#ccc"/><rect x="8" y="3" width="10" height="11" fill="#1877d2" stroke="#8bc" stroke-width=".7"/></svg>
  <div class="d" style="left:228px;top:252px">INVH611 - Viewing</div>
  <svg class="a" style="left:386px;top:247px" width="20" height="20" viewBox="0 0 20 20"><ellipse cx="9" cy="12" rx="8" ry="6.500" fill="#b9cfe0" stroke="#7fa0b8" stroke-width=".6"/><circle cx="6" cy="10" r="1.300" fill="#d33"/><circle cx="9" cy="8.500" r="1.300" fill="#3a3"/><circle cx="5" cy="14" r="1.300" fill="#38c"/><path d="M18 1 12 15 9.500 16.500 10 13.500 15.500 1z" fill="#e8b84a"/></svg>
  <div class="d" style="left:408px;top:252px;font-weight:bold;font-size:11.600px;color:#333">2021_01_18_10_01_27_...</div>
  <svg class="a" style="left:27px;top:408px" width="20" height="20" viewBox="0 0 20 20"><rect x="2" y="3" width="10" height="15" rx="1" fill="#f3d27f"/><rect x="2" y="3" width="3" height="15" fill="#efc662"/></svg>
  <div class="d" style="left:48px;top:412px">US Versions</div>
  <svg class="a" style="left:206px;top:408px" width="21" height="21" viewBox="0 0 21 21"><rect x="0" y="0" width="7" height="20" fill="#555"/><rect x="1.500" y="3" width="4" height="2.500" fill="#ccc"/><rect x="7" y="0" width="13" height="20" fill="#2f7fb5"/><text x="13.500" y="19" font-size="9" fill="#fff" text-anchor="middle">M</text></svg>
  <div class="d" style="left:228px;top:412px">NetSupport : INVH652</div>

  <div class="a" style="left:17px;top:488px;width:12px;height:12px;box-sizing:border-box;border:1.500px solid #555;border-radius:1px"></div>
  <div class="d" style="left:43px;top:486px;font-size:11.600px">Share system audio</div>
  <div class="a" style="left:447px;top:473px;width:68px;height:32px;background:#1a73e8;border-radius:4px;color:#fff;text-align:center;font-size:11.300px;font-weight:bold;line-height:32px">Share</div>
  <div class="a" style="left:523px;top:473px;width:68px;height:32px;box-sizing:border-box;border:1px solid #dadce0;border-radius:4px;color:#1a73e8;text-align:center;font-size:11.300px;line-height:30px">Cancel</div>
</div>
</body></html>
